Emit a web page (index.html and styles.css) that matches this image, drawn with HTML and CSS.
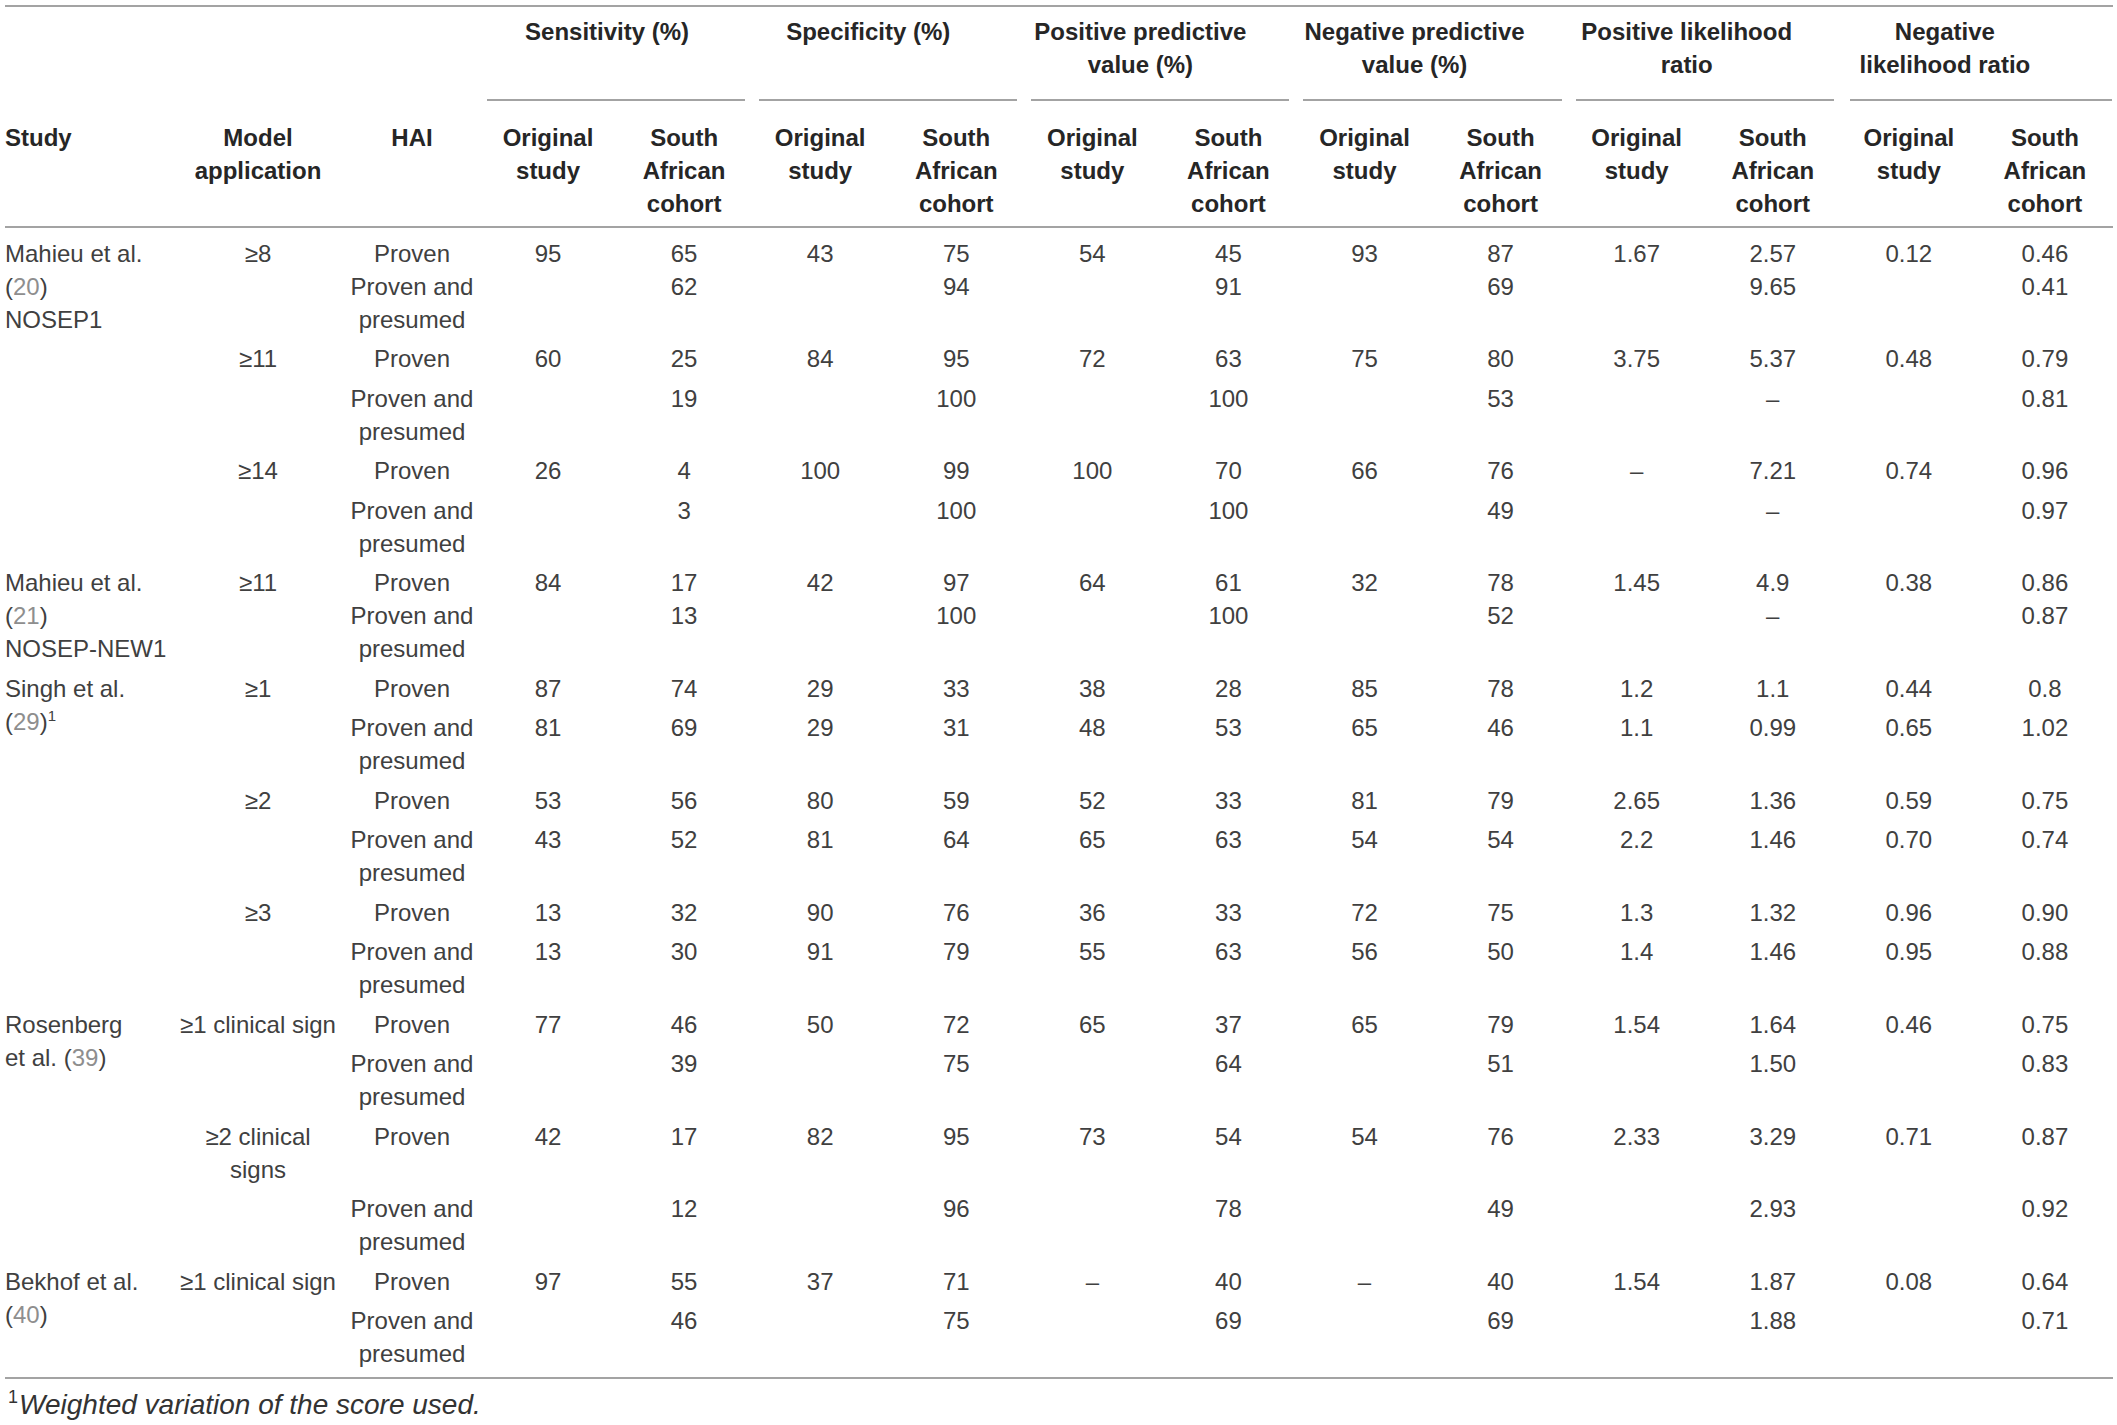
FILE: index.html
```html
<!DOCTYPE html>
<html lang="en">
<head>
<meta charset="utf-8">
<title>Table</title>
<link rel="stylesheet" href="styles.css">
</head>
<body>
<div class="page">
<table class="tbl">
  <colgroup>
    <col class="c-study"><col class="c-model"><col class="c-hai">
    <col><col><col><col><col><col><col><col><col><col><col><col>
  </colgroup>
  <thead>
    <tr class="grp-row">
      <th colspan="3" class="blank"></th>
      <th colspan="2" class="grp"><div class="grp-line"><div class="grp-text sh9">Sensitivity (%)</div></div></th>
      <th colspan="2" class="grp"><div class="grp-line"><div class="grp-text sh20">Specificity (%)</div></div></th>
      <th colspan="2" class="grp"><div class="grp-line"><div class="grp-text sh20">Positive predictive<br>value (%)</div></div></th>
      <th colspan="2" class="grp"><div class="grp-line"><div class="grp-text sh18">Negative predictive<br>value (%)</div></div></th>
      <th colspan="2" class="grp"><div class="grp-line"><div class="grp-text sh18">Positive likelihood<br>ratio</div></div></th>
      <th colspan="2" class="grp grp-last"><div class="grp-line"><div class="grp-text nlr">Negative<br>likelihood ratio</div></div></th>
    </tr>
    <tr class="sub-row">
      <th class="study">Study</th>
      <th class="model">Model application</th>
      <th class="hai">HAI</th>
      <th>Original study</th><th>South African cohort</th>
      <th>Original study</th><th>South African cohort</th>
      <th>Original study</th><th>South African cohort</th>
      <th>Original study</th><th>South African cohort</th>
      <th>Original study</th><th>South African cohort</th>
      <th>Original study</th><th>South African cohort</th>
    </tr>
  </thead>
  <tbody>
    <tr class="first">
      <td class="study">Mahieu et al.<br>(<span class="ref">20</span>)<br>NOSEP1</td>
      <td class="model">≥8</td>
      <td class="hai">Proven<br>Proven and presumed</td>
      <td>95</td><td>65<br>62</td>
      <td>43</td><td>75<br>94</td>
      <td>54</td><td>45<br>91</td>
      <td>93</td><td>87<br>69</td>
      <td>1.67</td><td>2.57<br>9.65</td>
      <td>0.12</td><td>0.46<br>0.41</td>
    </tr>
    <tr>
      <td class="study"></td><td class="model">≥11</td><td class="hai">Proven</td>
      <td>60</td><td>25</td><td>84</td><td>95</td><td>72</td><td>63</td><td>75</td><td>80</td><td>3.75</td><td>5.37</td><td>0.48</td><td>0.79</td>
    </tr>
    <tr>
      <td class="study"></td><td class="model"></td><td class="hai">Proven and presumed</td>
      <td></td><td>19</td><td></td><td>100</td><td></td><td>100</td><td></td><td>53</td><td></td><td>–</td><td></td><td>0.81</td>
    </tr>
    <tr>
      <td class="study"></td><td class="model">≥14</td><td class="hai">Proven</td>
      <td>26</td><td>4</td><td>100</td><td>99</td><td>100</td><td>70</td><td>66</td><td>76</td><td>–</td><td>7.21</td><td>0.74</td><td>0.96</td>
    </tr>
    <tr>
      <td class="study"></td><td class="model"></td><td class="hai">Proven and presumed</td>
      <td></td><td>3</td><td></td><td>100</td><td></td><td>100</td><td></td><td>49</td><td></td><td>–</td><td></td><td>0.97</td>
    </tr>
    <tr>
      <td class="study">Mahieu et al.<br>(<span class="ref">21</span>)<br><span class="nw">NOSEP-NEW1</span></td>
      <td class="model">≥11</td>
      <td class="hai">Proven<br>Proven and presumed</td>
      <td>84</td><td>17<br>13</td>
      <td>42</td><td>97<br>100</td>
      <td>64</td><td>61<br>100</td>
      <td>32</td><td>78<br>52</td>
      <td>1.45</td><td>4.9<br>–</td>
      <td>0.38</td><td>0.86<br>0.87</td>
    </tr>
    <tr>
      <td class="study" rowspan="6">Singh et al.<br>(<span class="ref">29</span>)<sup class="fn">1</sup></td>
      <td class="model">≥1</td><td class="hai">Proven</td>
      <td>87</td><td>74</td><td>29</td><td>33</td><td>38</td><td>28</td><td>85</td><td>78</td><td>1.2</td><td>1.1</td><td>0.44</td><td>0.8</td>
    </tr>
    <tr>
      <td class="model"></td><td class="hai">Proven and presumed</td>
      <td>81</td><td>69</td><td>29</td><td>31</td><td>48</td><td>53</td><td>65</td><td>46</td><td>1.1</td><td>0.99</td><td>0.65</td><td>1.02</td>
    </tr>
    <tr>
      <td class="model">≥2</td><td class="hai">Proven</td>
      <td>53</td><td>56</td><td>80</td><td>59</td><td>52</td><td>33</td><td>81</td><td>79</td><td>2.65</td><td>1.36</td><td>0.59</td><td>0.75</td>
    </tr>
    <tr>
      <td class="model"></td><td class="hai">Proven and presumed</td>
      <td>43</td><td>52</td><td>81</td><td>64</td><td>65</td><td>63</td><td>54</td><td>54</td><td>2.2</td><td>1.46</td><td>0.70</td><td>0.74</td>
    </tr>
    <tr>
      <td class="model">≥3</td><td class="hai">Proven</td>
      <td>13</td><td>32</td><td>90</td><td>76</td><td>36</td><td>33</td><td>72</td><td>75</td><td>1.3</td><td>1.32</td><td>0.96</td><td>0.90</td>
    </tr>
    <tr>
      <td class="model"></td><td class="hai">Proven and presumed</td>
      <td>13</td><td>30</td><td>91</td><td>79</td><td>55</td><td>63</td><td>56</td><td>50</td><td>1.4</td><td>1.46</td><td>0.95</td><td>0.88</td>
    </tr>
    <tr>
      <td class="study" rowspan="4">Rosenberg<br>et al. (<span class="ref">39</span>)</td>
      <td class="model">≥1 clinical sign</td><td class="hai">Proven</td>
      <td>77</td><td>46</td><td>50</td><td>72</td><td>65</td><td>37</td><td>65</td><td>79</td><td>1.54</td><td>1.64</td><td>0.46</td><td>0.75</td>
    </tr>
    <tr>
      <td class="model"></td><td class="hai">Proven and presumed</td>
      <td></td><td>39</td><td></td><td>75</td><td></td><td>64</td><td></td><td>51</td><td></td><td>1.50</td><td></td><td>0.83</td>
    </tr>
    <tr>
      <td class="model">≥2 clinical<br>signs</td><td class="hai">Proven</td>
      <td>42</td><td>17</td><td>82</td><td>95</td><td>73</td><td>54</td><td>54</td><td>76</td><td>2.33</td><td>3.29</td><td>0.71</td><td>0.87</td>
    </tr>
    <tr>
      <td class="model"></td><td class="hai">Proven and presumed</td>
      <td></td><td>12</td><td></td><td>96</td><td></td><td>78</td><td></td><td>49</td><td></td><td>2.93</td><td></td><td>0.92</td>
    </tr>
    <tr>
      <td class="study" rowspan="2">Bekhof et al.<br>(<span class="ref">40</span>)</td>
      <td class="model">≥1 clinical sign</td><td class="hai">Proven</td>
      <td>97</td><td>55</td><td>37</td><td>71</td><td>–</td><td>40</td><td>–</td><td>40</td><td>1.54</td><td>1.87</td><td>0.08</td><td>0.64</td>
    </tr>
    <tr class="last">
      <td class="model"></td><td class="hai">Proven and presumed</td>
      <td></td><td>46</td><td></td><td>75</td><td></td><td>69</td><td></td><td>69</td><td></td><td>1.88</td><td></td><td>0.71</td>
    </tr>
  </tbody>
</table>
<p class="footnote"><sup class="fn-mark">1</sup><em>Weighted variation of the score used.</em></p>
</div>
</body>
</html>
```

FILE: styles.css
```css
html, body {
  margin: 0;
  padding: 0;
  background: #ffffff;
}

.page {
  padding: 5px 0 0 5px;
  font-family: "Liberation Sans", Arial, Helvetica, sans-serif;
  font-size: 24px;
  line-height: 33px;
  color: #404040;
}

.tbl {
  width: 2108px;
  table-layout: fixed;
  border-collapse: separate;
  border-spacing: 0;
  border-top: 2px solid #a3a3a3;
  border-bottom: 2px solid #a3a3a3;
}

.c-study { width: 167px; }
.c-model { width: 172px; }
.c-hai { width: 136px; }

.tbl th {
  font-weight: bold;
  color: #262626;
  vertical-align: top;
  text-align: center;
  padding: 0;
}

.tbl th.blank {
  padding: 0;
}

.tbl th.grp {
  padding: 0 7px;
}

.tbl th.grp-last {
  padding: 0 1px 0 9px;
}

.grp-line {
  height: 66px;
  padding: 8px 0 18px;
  border-bottom: 2px solid #a3a3a3;
}

.grp-text {
  white-space: nowrap;
}

.grp-text.sh9 { margin: 0 9px 0 -9px; }
.grp-text.sh18 { margin: 0 18px 0 -18px; }
.grp-text.sh20 { margin: 0 20px 0 -20px; }
.grp-text.nlr { margin: 0 72px 0 0; }

.tbl .sub-row th {
  padding: 20px 0 6px;
  border-bottom: 2px solid #a3a3a3;
}

.tbl th.study,
.tbl td.study {
  text-align: left;
  padding-left: 0;
  padding-right: 4px;
}

.tbl td {
  vertical-align: top;
  text-align: center;
  padding: 3px 0 3.5px;
}

.tbl td.model {
  padding-left: 4px;
  padding-right: 4px;
}

.tbl td.hai {
  padding-left: 4px;
  padding-right: 4px;
}

.tbl tr.first td {
  padding-top: 8.5px;
}

.tbl tr.last td,
.tbl td[rowspan="2"] {
  padding-bottom: 7px;
}

.nw {
  white-space: nowrap;
}

.ref {
  color: #8e8e8e;
}

.fn {
  font-size: 15px;
  line-height: 0;
  vertical-align: 9px;
}

.footnote {
  margin: 8.5px 0 0 3px;
  font-size: 28px;
  line-height: 33px;
  color: #333333;
}

.fn-mark {
  font-size: 18px;
  line-height: 0;
  vertical-align: 11px;
  margin-right: 1px;
}
```
